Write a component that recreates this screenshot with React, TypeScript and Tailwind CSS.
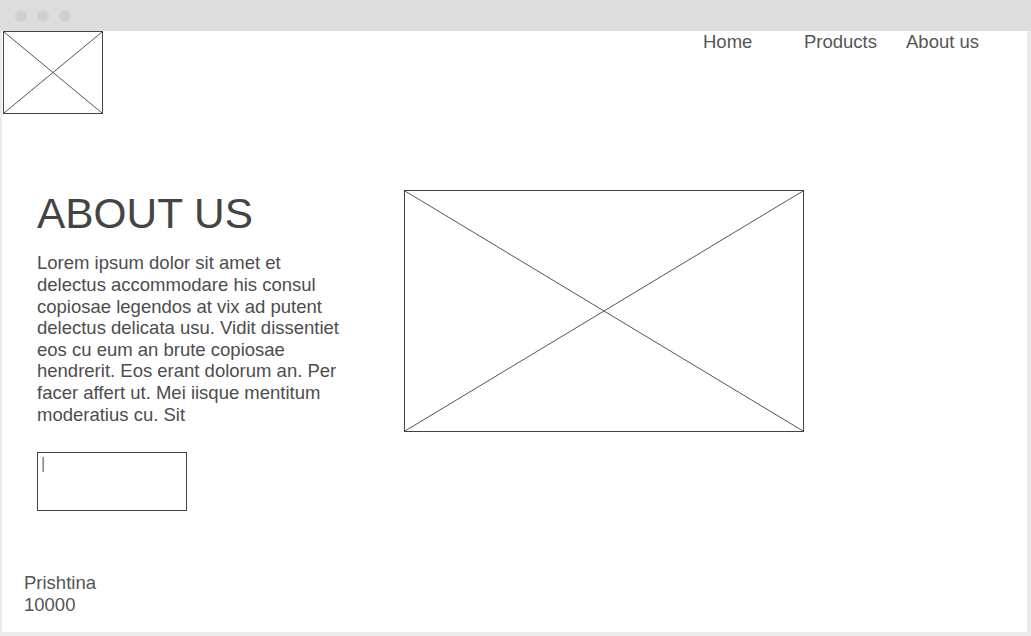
import React from 'react'

function Placeholder({ className }: { className: string }) {
  return (
    <div className={`relative shrink-0 border border-[#444444] bg-white ${className}`}>
      <svg className="absolute inset-0 h-full w-full" preserveAspectRatio="none" viewBox="0 0 100 100">
        <line x1="0" y1="0" x2="100" y2="100" stroke="#555555" strokeWidth="1" vectorEffect="non-scaling-stroke" />
        <line x1="100" y1="0" x2="0" y2="100" stroke="#555555" strokeWidth="1" vectorEffect="non-scaling-stroke" />
      </svg>
    </div>
  )
}

export default function App() {
  return (
    <div className="flex h-[636px] w-[1031px] flex-col bg-[#ebebeb] font-['Liberation_Sans',Arial,sans-serif]">
      {/* window chrome */}
      <div className="flex h-[31px] shrink-0 items-center gap-[10px] bg-[#dddddd] pl-[15px]">
        <span className="h-[12px] w-[12px] rounded-full bg-[#cfcfcf]" />
        <span className="h-[12px] w-[12px] rounded-full bg-[#cfcfcf]" />
        <span className="h-[12px] w-[12px] rounded-full bg-[#cfcfcf]" />
      </div>

      <div className="mb-[4px] ml-[2px] mr-[4px] flex flex-1 flex-col bg-white">
        <header className="flex items-start">
          <Placeholder className="ml-[1px] h-[83px] w-[100px]" />
          <nav className="ml-auto mr-[20px] flex pt-[1px] text-[18.5px] leading-[20px] text-[#555555]">
            <a className="w-[101px]">Home</a>
            <a className="w-[102px]">Products</a>
            <a className="w-[101px]">About us</a>
          </nav>
        </header>

        <section className="mt-[76px] flex items-start pl-[35px]">
          <div className="flex w-[367px] shrink-0 flex-col pt-[3px]">
            <h1 className="text-[42.4px] leading-none text-[#444444]">ABOUT US</h1>
            <p className="mt-[17px] w-[306px] text-[18.5px] leading-[21.6px] text-[#4d4d4d]">
              Lorem ipsum dolor sit amet et delectus accommodare his consul copiosae legendos at vix ad putent delectus delicata usu. Vidit dissentiet eos cu eum an brute copiosae hendrerit. Eos erant dolorum an. Per facer affert ut. Mei iisque mentitum moderatius cu. Sit
            </p>
            <div className="mt-[27px] h-[59px] w-[150px] border border-[#444444] pl-[3px] pt-[2px] text-[16px] leading-[18px] text-[#777777]">|</div>
          </div>
          <Placeholder className="h-[242px] w-[400px]" />
        </section>

        <footer className="mt-[61px] pl-[22px] text-[18.5px] leading-[22px] text-[#555555]">
          <div>Prishtina</div>
          <div>10000</div>
        </footer>
      </div>
    </div>
  )
}
